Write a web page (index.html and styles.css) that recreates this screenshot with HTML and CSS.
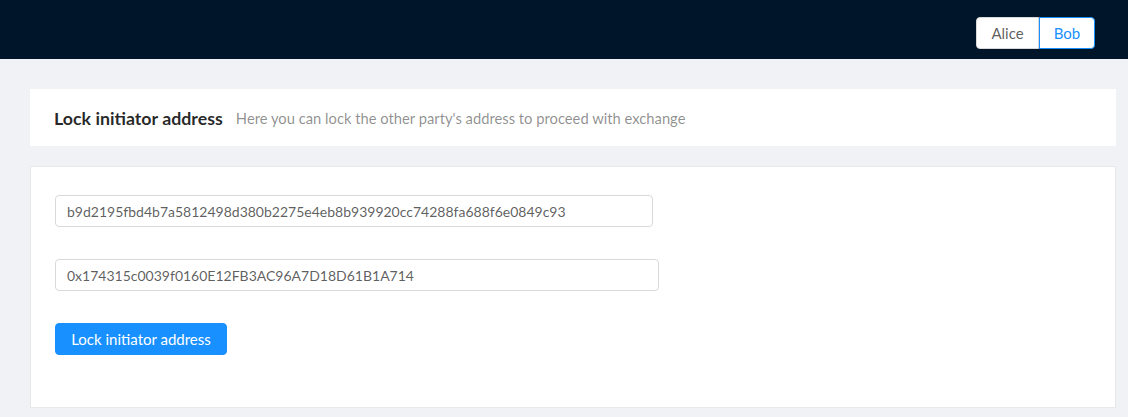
FILE: index.html
```html
<!DOCTYPE html>
<html>
<head>
<meta charset="utf-8">
<link rel="stylesheet" href="styles.css">
</head>
<body>
<header class="header">
  <div class="radio-group">
    <span class="radio">Alice</span>
    <span class="radio radio-active">Bob</span>
  </div>
</header>
<main class="content">
  <section class="title-card">
    <span class="title">Lock initiator address</span>
    <span class="subtitle">Here you can lock the other party's address to proceed with exchange</span>
  </section>
  <section class="form-card">
    <input class="input input-a" type="text" value="b9d2195fbd4b7a5812498d380b2275e4eb8b939920cc74288fa688f6e0849c93">
    <input class="input input-b" type="text" value="0x174315c0039f0160E12FB3AC96A7D18D61B1A714">
    <button class="btn">Lock initiator address</button>
  </section>
</main>
</body>
</html>
```
FILE: styles.css
```css
* { box-sizing: border-box; }
html, body { margin: 0; padding: 0; }
body {
  background: #f0f2f5;
  font-family: Lato, "Noto Sans", sans-serif;
  font-size: 14px;
  color: rgba(0,0,0,0.65);
  width: 1128px;
  height: 417px;
  overflow: hidden;
}
.header {
  height: 59px;
  background: #001529;
  display: flex;
  justify-content: flex-end;
  align-items: flex-start;
  padding: 17px 33px 0 0;
}
.radio-group { display: flex; }
.radio {
  height: 32px;
  line-height: 30px;
  background: #fff;
  border: 1px solid #d9d9d9;
  color: rgba(0,0,0,0.65);
  font-size: 15px;
  text-align: center;
}
.radio:first-child { border-radius: 4px 0 0 4px; width: 63px; }
.radio-active {
  border-color: #1890ff;
  color: #1890ff;
  border-radius: 0 4px 4px 0;
  width: 56px;
}
.content { padding: 30px 12px 0 30px; }
.title-card {
  background: #fff;
  height: 57px;
  display: flex;
  align-items: center;
  padding: 0 24px;
  gap: 13px;
}
.title {
  font-weight: 700;
  font-size: 17.8px;
  color: rgba(0,0,0,0.85);
}
.subtitle {
  font-size: 14.75px;
  color: rgba(0,0,0,0.45);
  padding-top: 1px;
}
.form-card {
  margin-top: 20px;
  background: #fff;
  border: 1px solid #e8e8e8;
  height: 242px;
  padding: 28px 24px;
  display: flex;
  flex-direction: column;
  align-items: flex-start;
  gap: 32px;
}
.input {
  height: 32px;
  border: 1px solid #d9d9d9;
  border-radius: 4px;
  padding: 0 11px;
  font-family: Lato, "Noto Sans", sans-serif;
  font-size: 14px;
  color: rgba(0,0,0,0.65);
  background: #fff;
  outline: none;
}
.input-a { width: 598px; }
.input-b { width: 604px; }
.btn {
  height: 32px;
  width: 172px;
  background: #1890ff;
  border: 1px solid #1890ff;
  border-radius: 4px;
  color: #fff;
  font-family: Lato, "Noto Sans", sans-serif;
  font-size: 15px;
  padding: 0;
}
```
